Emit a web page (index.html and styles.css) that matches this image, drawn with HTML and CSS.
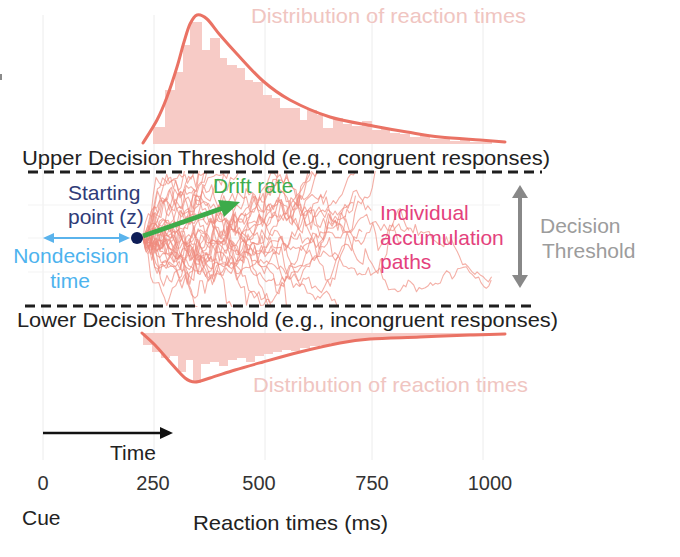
FILE: index.html
```html
<!DOCTYPE html>
<html lang="en">
<head>
<meta charset="utf-8">
<title>Drift diffusion model</title>
<link rel="stylesheet" href="styles.css">
</head>
<body>
<div class="canvas">
<svg class="diagram" width="680" height="557" viewBox="0 0 680 557" xmlns="http://www.w3.org/2000/svg">
  <defs>
    <clipPath id="pathClip"><rect x="140" y="171" width="362" height="136"/></clipPath>
  </defs>
  <rect class="edge-mark" x="0" y="74" width="2" height="6"/>
  <g class="grid">
    <line x1="43" y1="15" x2="43" y2="460"/>
    <line x1="154" y1="15" x2="154" y2="460"/>
    <line x1="265" y1="15" x2="265" y2="460"/>
    <line x1="372" y1="15" x2="372" y2="460"/>
    <line x1="483" y1="15" x2="483" y2="460"/>
  </g>
  <g class="grid-h">
    <line x1="28" y1="205" x2="500" y2="205"/>
    <line x1="28" y1="238" x2="500" y2="238"/>
    <line x1="28" y1="272" x2="500" y2="272"/>
  </g>
  <g id="barsUp" class="bars"></g>
  <g id="barsDown" class="bars"></g>
  <path id="curveUp" class="curve" d=""/>
  <path id="curveDown" class="curve" d=""/>
  <g id="walks" class="walks" clip-path="url(#pathClip)"></g>

  <line class="thr-line" x1="28" y1="172" x2="542" y2="172"/>
  <line class="thr-line" x1="25" y1="306" x2="534" y2="306"/>

  <text class="t dist" x="251" y="23" textLength="275" lengthAdjust="spacingAndGlyphs">Distribution of reaction times</text>
  <text class="t thr" x="22" y="165" textLength="528" lengthAdjust="spacingAndGlyphs">Upper Decision Threshold (e.g., congruent responses)</text>
  <text class="t thr" x="17" y="327" textLength="541" lengthAdjust="spacingAndGlyphs">Lower Decision Threshold (e.g., incongruent responses)</text>
  <text class="t dist" x="253" y="392" textLength="275" lengthAdjust="spacingAndGlyphs">Distribution of reaction times</text>

  <text class="t start" x="68" y="200">Starting</text>
  <text class="t start" x="68" y="224">point (z)</text>
  <text class="t nondec mid" x="71" y="263">Nondecision</text>
  <text class="t nondec mid" x="70" y="288">time</text>
  <text class="t drift" x="213" y="193">Drift rate</text>
  <text class="t paths" x="380" y="220">Individual</text>
  <text class="t paths" x="380" y="245">accumulation</text>
  <text class="t paths" x="380" y="269">paths</text>
  <text class="t gray" x="540" y="233">Decision</text>
  <text class="t gray" x="542" y="258">Threshold</text>

  <line class="nd-line" x1="50" y1="238" x2="123" y2="238"/>
  <polygon class="nd-head" points="43,238 54,233 54,243"/>
  <polygon class="nd-head" points="130,238 119,233 119,243"/>
  <line class="drift-line" x1="143" y1="236" x2="223" y2="208"/>
  <polygon class="drift-head" points="240,202 224,217 218,200"/>
  <circle class="dot" cx="137" cy="238" r="6"/>

  <line class="dt-line" x1="520" y1="195" x2="520" y2="278"/>
  <polygon class="dt-head" points="520,185 528,198 512,198"/>
  <polygon class="dt-head" points="520,288 528,275 512,275"/>

  <line class="time-line" x1="43" y1="433" x2="161" y2="433"/>
  <polygon class="time-head" points="173,433 160,427 160,439"/>
  <text class="t axis" x="110" y="460">Time</text>

  <text class="t tick mid" x="43" y="490">0</text>
  <text class="t tick mid" x="153" y="490">250</text>
  <text class="t tick mid" x="259" y="490">500</text>
  <text class="t tick mid" x="372" y="490">750</text>
  <text class="t tick mid" x="490" y="490">1000</text>
  <text class="t axis" x="22" y="525">Cue</text>
  <text class="t axis" x="193" y="530" textLength="195" lengthAdjust="spacingAndGlyphs">Reaction times (ms)</text>
</svg>
</div>
<script src="script.js"></script>
</body>
</html>
```

FILE: styles.css
```css
html, body {
  margin: 0;
  padding: 0;
  background: #ffffff;
}
.canvas {
  width: 680px;
  height: 557px;
  overflow: hidden;
}
.diagram {
  display: block;
}
.edge-mark { fill: #8a8a8a; }
.grid line { stroke: #ececec; stroke-width: 1; }
.grid-h line { stroke: #f3f3f3; stroke-width: 1; }
.bars rect { fill: #f7cbc6; }
.curve { fill: none; stroke: #ea7264; stroke-width: 3; stroke-linejoin: round; stroke-linecap: round; }
.walks path { fill: none; stroke: #ef8b7d; stroke-width: 1.1; stroke-opacity: 0.68; stroke-linejoin: round; }
.thr-line { stroke: #1e1e1e; stroke-width: 3; stroke-dasharray: 10 6; }

.t { font-family: "Liberation Sans", Arial, Helvetica, sans-serif; font-size: 21px; }
.mid { text-anchor: middle; }
.dist { fill: #f0c5c1; }
.thr { fill: #222222; }
.start { fill: #2f3b78; }
.nondec { fill: #4db3ee; }
.drift { fill: #3fac4d; }
.paths { fill: #e4417c; }
.gray { fill: #9c9c9c; }
.axis { fill: #222222; }
.tick { fill: #333333; font-size: 20px; }

.nd-line { stroke: #5ab3ec; stroke-width: 2; }
.nd-head { fill: #5ab3ec; }
.drift-line { stroke: #3dab4a; stroke-width: 5; }
.drift-head { fill: #3dab4a; }
.dot { fill: #0e1d57; }
.dt-line { stroke: #888888; stroke-width: 4; }
.dt-head { fill: #888888; }
.time-line { stroke: #111111; stroke-width: 2.5; }
.time-head { fill: #111111; }
```

FILE: script.js
```js
(function () {
  var NS = "http://www.w3.org/2000/svg";

  function smooth(pts) {
    var d = "M" + pts[0][0] + "," + pts[0][1];
    for (var i = 0; i < pts.length - 1; i++) {
      var p0 = pts[i - 1] || pts[i], p1 = pts[i], p2 = pts[i + 1], p3 = pts[i + 2] || p2;
      var c1x = p1[0] + (p2[0] - p0[0]) / 6, c1y = p1[1] + (p2[1] - p0[1]) / 6;
      var c2x = p2[0] - (p3[0] - p1[0]) / 6, c2y = p2[1] - (p3[1] - p1[1]) / 6;
      d += " C" + c1x.toFixed(1) + "," + c1y.toFixed(1) + " " + c2x.toFixed(1) + "," + c2y.toFixed(1) + " " + p2[0] + "," + p2[1];
    }
    return d;
  }

  var up = [[143,143],[157,120],[167,97],[177,67],[184,42],[190,24],[197,15],[207,19],[220,35],[237,54],[263,81],[290,100],[330,117],[373,126],[407,132],[440,137],[480,140],[505,142]];
  var down = [[142,333],[155,345],[170,362],[185,378],[195,382],[210,378],[235,370],[263,362],[300,352],[340,343],[370,339],[420,337],[470,335],[505,334]];
  document.getElementById("curveUp").setAttribute("d", smooth(up));
  document.getElementById("curveDown").setAttribute("d", smooth(down));

  var barsUp = [[153,165,127],[165,175,90],[175,183,72],[183,190,45],[190,202,22],[202,210,50],[210,220,38],[220,227,58],[227,237,65],[237,245,68],[245,253,80],[253,263,82],[263,272,95],[272,280,98],[280,290,108],[290,300,108],[300,307,120],[307,317,110],[317,323,115],[323,333,128],[333,343,118],[343,352,124],[352,362,126],[362,372,121],[372,381,130],[381,390,128],[390,400,133],[400,410,134],[410,420,137],[420,430,135],[430,440,139],[440,450,139],[450,460,141],[460,470,140],[470,480,142],[480,492,142]];
  var barsDown = [[143,152,345],[152,161,352],[161,170,358],[170,178,356],[178,186,372],[186,193,360],[193,201,383],[201,210,364],[210,219,362],[219,228,366],[228,237,360],[237,246,358],[246,255,362],[255,264,356],[264,273,354],[273,282,352],[282,291,350],[291,300,351],[300,310,348],[310,320,346],[320,330,345],[330,340,343],[340,350,342],[350,360,341],[360,370,340],[370,380,339],[380,390,339],[390,400,338],[400,420,337],[420,440,336],[440,460,336],[460,480,335],[480,500,335]];

  var gU = document.getElementById("barsUp");
  barsUp.forEach(function (b) {
    var r = document.createElementNS(NS, "rect");
    r.setAttribute("x", b[0]); r.setAttribute("y", b[2]);
    r.setAttribute("width", b[1] - b[0]); r.setAttribute("height", 144 - b[2]);
    gU.appendChild(r);
  });
  var gD = document.getElementById("barsDown");
  barsDown.forEach(function (b) {
    var r = document.createElementNS(NS, "rect");
    r.setAttribute("x", b[0]); r.setAttribute("y", 333);
    r.setAttribute("width", b[1] - b[0]); r.setAttribute("height", b[2] - 333);
    gD.appendChild(r);
  });

  function mulberry32(a) {
    return function () {
      a |= 0; a = a + 0x6D2B79F5 | 0;
      var t = Math.imul(a ^ a >>> 15, 1 | a);
      t = t + Math.imul(t ^ t >>> 7, 61 | t) ^ t;
      return ((t ^ t >>> 14) >>> 0) / 4294967296;
    };
  }
  var rnd = mulberry32(9090);
  function gauss() {
    var u = 1 - rnd(), v = rnd();
    return Math.sqrt(-2 * Math.log(u)) * Math.cos(2 * Math.PI * v);
  }

  var gW = document.getElementById("walks");
  var N = 34;
  for (var k = 0; k < N; k++) {
    var x = 143, y = 238;
    var d = "M143,238";
    var longPath = (k % 11 === 4);
    var drift = longPath ? 0.2 : -(0.55 + rnd() * 0.35);
    var sd = longPath ? 4.5 : 7 + rnd() * 2;
    var maxX = longPath ? 490 : 320 + rnd() * 100;
    var steps = 0;
    while (x < maxX && steps < 400) {
      x += 2.2 + rnd() * 1.3;
      y += drift + gauss() * sd;
      steps++;
      if (y <= 172) { y = 171; d += " L" + x.toFixed(1) + "," + y.toFixed(1); break; }
      if (y >= 306) { y = 307; d += " L" + x.toFixed(1) + "," + y.toFixed(1); break; }
      d += " L" + x.toFixed(1) + "," + y.toFixed(1);
    }
    var p = document.createElementNS(NS, "path");
    p.setAttribute("d", d);
    gW.appendChild(p);
  }
})();
```
